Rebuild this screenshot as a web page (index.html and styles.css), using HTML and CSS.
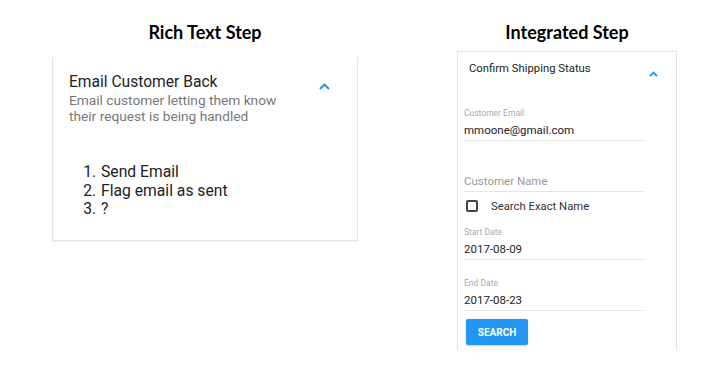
FILE: index.html
```html
<!DOCTYPE html>
<html lang="en">
<head>
    <meta charset="UTF-8">
    <meta name="viewport" content="width=device-width, initial-scale=1.0">
    <title>Step Types</title>
    <link rel="stylesheet" href="styles.css">
</head>
<body>
    <div class="page">
        <div class="column rich">
            <h2 class="step-title">Rich Text Step</h2>
            <div class="card rich-card">
                <div class="card-head">
                    <div>
                        <div class="card-name">Email Customer Back</div>
                        <div class="card-desc">Email customer letting them know their request is being handled</div>
                    </div>
                    <svg class="chevron" width="11" height="7" viewBox="0 0 11 7"><path d="M1 6 L5.5 1.5 L10 6" fill="none" stroke="#2196f3" stroke-width="2"/></svg>
                </div>
                <ol class="steps">
                    <li>Send Email</li>
                    <li>Flag email as sent</li>
                    <li>?</li>
                </ol>
            </div>
        </div>

        <div class="column integrated">
            <h2 class="step-title">Integrated Step</h2>
            <div class="card form-card">
                <div class="form-head">
                    <span>Confirm Shipping Status</span>
                    <svg class="chevron small" width="9" height="6" viewBox="0 0 9 6"><path d="M1 5 L4.5 1.5 L8 5" fill="none" stroke="#2196f3" stroke-width="1.8"/></svg>
                </div>
                <div class="form-body">
                    <div class="field">
                        <div class="field-label">Customer Email</div>
                        <div class="field-value">mmoone@gmail.com</div>
                    </div>
                    <div class="field">
                        <div class="field-label"></div>
                        <div class="field-value placeholder">Customer Name</div>
                    </div>
                    <div class="check-row">
                        <span class="checkbox"></span>
                        <span>Search Exact Name</span>
                    </div>
                    <div class="field">
                        <div class="field-label">Start Date</div>
                        <div class="field-value">2017-08-09</div>
                    </div>
                    <div class="field">
                        <div class="field-label">End Date</div>
                        <div class="field-value">2017-08-23</div>
                    </div>
                    <button class="search-btn">SEARCH</button>
                </div>
            </div>
        </div>
    </div>
</body>
</html>
```

FILE: styles.css
```css
body {
    margin: 0;
    background-color: #fff;
    font-family: Roboto, 'Liberation Sans', sans-serif;
    color: #222;
}
.page {
    display: flex;
    padding-left: 52px;
    height: 366px;
    overflow: hidden;
}
.column {
    display: flex;
    flex-direction: column;
}
.rich {
    width: 306px;
}
.integrated {
    width: 220px;
    margin-left: 99px;
}
.step-title {
    margin: 0;
    font-family: Lato, 'Open Sans', sans-serif;
    font-weight: bold;
    font-size: 18px;
    color: #000;
    text-align: center;
}
.rich .step-title {
    padding-top: 21px;
    line-height: 22px;
    margin-bottom: 14px;
}
.integrated .step-title {
    padding-top: 21px;
    line-height: 22px;
    margin-bottom: 8px;
}
.card {
    background-color: #fff;
    border: 1px solid #e4e4e4;
    box-sizing: border-box;
}
.rich-card {
    border-top: none;
    padding: 15px 0 21px 16px;
    box-shadow: 0 1px 2px rgba(0, 0, 0, 0.06);
}
.card-head {
    display: flex;
    justify-content: space-between;
    align-items: flex-start;
}
.card-name {
    font-size: 15.6px;
    line-height: 20px;
    color: #222;
}
.card-desc {
    width: 215px;
    font-size: 13.7px;
    line-height: 16px;
    color: #777;
}
.chevron {
    margin-top: 11px;
    margin-right: 27px;
}
.steps {
    margin: 39px 0 0 0;
    padding-left: 31px;
    font-size: 15.7px;
    line-height: 18.5px;
    color: #222;
}
.steps li {
    padding-left: 1px;
}
.form-card {
    flex: 1;
    border-bottom: none;
    margin-bottom: 16px;
}
.form-head {
    display: flex;
    justify-content: space-between;
    padding: 9px 0 0 11px;
    font-size: 11.3px;
    line-height: 16px;
    color: #222;
}
.chevron.small {
    margin-top: 10px;
    margin-right: 18px;
}
.form-body {
    padding: 30px 32px 0 6px;
}
.field {
    margin-top: 17px;
    border-bottom: 1px solid #e6e6e6;
    padding-bottom: 2px;
}
.field:first-child {
    margin-top: 0;
}
.check-row + .field {
    margin-top: 6px;
}
.field-label {
    height: 12px;
    font-size: 8.5px;
    line-height: 12px;
    color: #aaa;
    margin-bottom: 3px;
}
.field-value {
    font-size: 11.5px;
    line-height: 16px;
    color: #222;
}
.placeholder {
    color: #999;
}
.check-row {
    display: flex;
    align-items: center;
    height: 28px;
    font-size: 11.3px;
    color: #333;
}
.checkbox {
    width: 8px;
    height: 8px;
    border: 2px solid #444;
    border-radius: 2px;
    margin-left: 2px;
    margin-right: 13px;
}
.search-btn {
    display: block;
    margin: 8px 0 0 2px;
    width: 62px;
    height: 26px;
    border: none;
    border-radius: 2px;
    background-color: #2196f3;
    color: #fff;
    font-family: Roboto, 'Liberation Sans', sans-serif;
    font-weight: bold;
    font-size: 10px;
    box-shadow: 0 1px 2px rgba(0, 0, 0, 0.2);
}
```
